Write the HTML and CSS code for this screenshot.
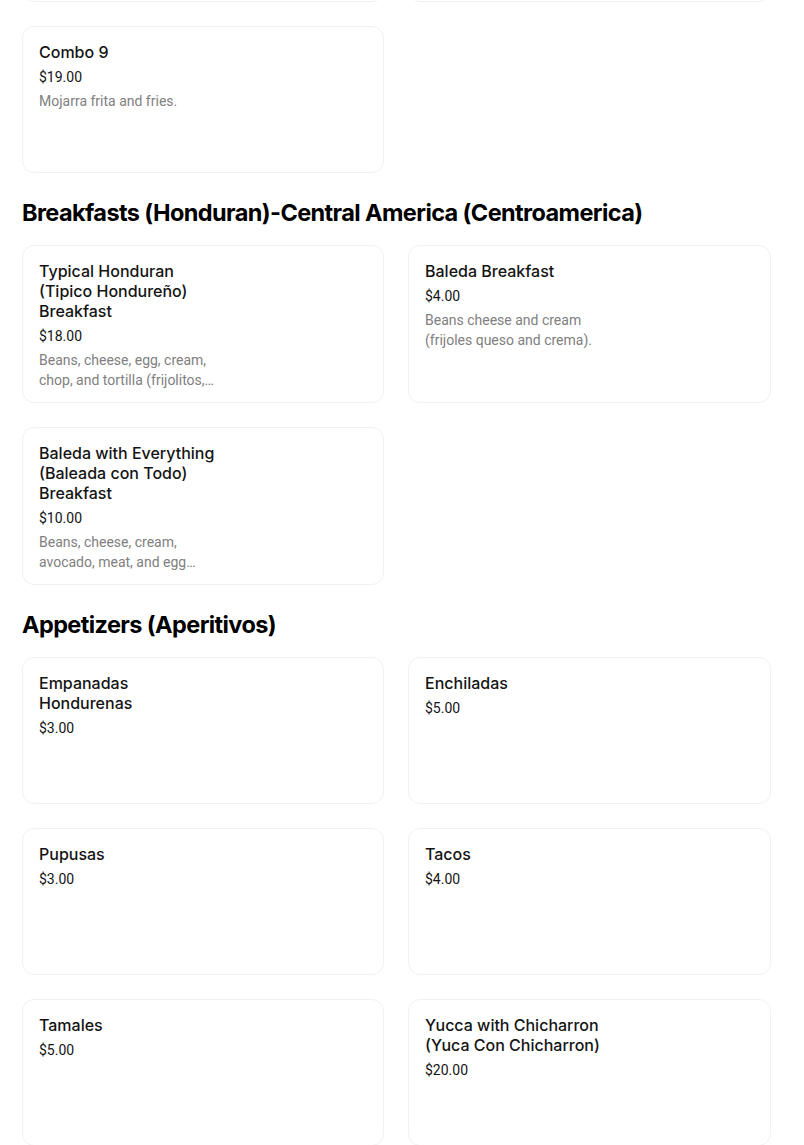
FILE: index.html
```html
<!DOCTYPE html>
<html lang="en">
<head>
<meta charset="utf-8">
<title>Menu</title>
<link rel="stylesheet" href="styles.css">
</head>
<body>
<main class="menu">
  <section class="section section-prev">
    <div class="grid">
      <div class="card"><div class="info"><div class="title">Combo 7</div><div class="price">$18.00</div></div></div>
      <div class="card"><div class="info"><div class="title">Combo 8</div><div class="price">$18.00</div></div></div>
      <div class="card"><div class="info"><div class="title">Combo 9</div><div class="price">$19.00</div><div class="desc">Mojarra frita and fries.</div></div></div>
    </div>
  </section>

  <section class="section">
    <h2 class="heading">Breakfasts (Honduran)-Central America (Centroamerica)</h2>
    <div class="grid">
      <div class="card"><div class="info"><div class="title">Typical Honduran (Tipico Hondureño) Breakfast</div><div class="price">$18.00</div><div class="desc">Beans, cheese, egg, cream, chop, and tortilla (frijolitos, queso, huevo, crema, chuleta y tortilla).</div></div></div>
      <div class="card"><div class="info"><div class="title">Baleda Breakfast</div><div class="price">$4.00</div><div class="desc">Beans cheese and cream (frijoles queso and crema).</div></div></div>
      <div class="card"><div class="info"><div class="title">Baleda with Everything (Baleada con Todo) Breakfast</div><div class="price">$10.00</div><div class="desc">Beans, cheese, cream, avocado, meat, and egg (baleada con todo).</div></div></div>
    </div>
  </section>

  <section class="section">
    <h2 class="heading">Appetizers (Aperitivos)</h2>
    <div class="grid">
      <div class="card"><div class="info"><div class="title">Empanadas Hondurenas</div><div class="price">$3.00</div></div></div>
      <div class="card"><div class="info"><div class="title">Enchiladas</div><div class="price">$5.00</div></div></div>
      <div class="card"><div class="info"><div class="title">Pupusas</div><div class="price">$3.00</div></div></div>
      <div class="card"><div class="info"><div class="title">Tacos</div><div class="price">$4.00</div></div></div>
      <div class="card"><div class="info"><div class="title">Tamales</div><div class="price">$5.00</div></div></div>
      <div class="card"><div class="info"><div class="title">Yucca with Chicharron (Yuca Con Chicharron)</div><div class="price">$20.00</div></div></div>
    </div>
  </section>
</main>
</body>
</html>
```

FILE: styles.css
```css
* { box-sizing: border-box; }
html, body { margin: 0; padding: 0; background: #fff; }
body { font-family: Roboto, "Liberation Sans", sans-serif; color: #000; }

.menu { padding: 0 33px 0 22px; }

.section-prev { margin-top: -145px; }

.heading {
  margin: 24px 0 16px;
  font-family: Inter, "Liberation Sans", sans-serif;
  font-size: 23.5px;
  line-height: 32px;
  font-weight: 700;
  letter-spacing: -0.6px;
  color: #000;
}

.grid {
  display: grid;
  grid-template-columns: 362px 1fr;
  gap: 24px;
}

.card {
  min-height: 147px;
  border: 1px solid #f1f1f1;
  border-radius: 12px;
  padding: 15px 16px 12px;
  background: #fff;
}

.info { max-width: 182px; }

.title {
  font-family: Inter, "Liberation Sans", sans-serif;
  font-size: 16px;
  line-height: 20px;
  font-weight: 500;
  color: #141414;
}

.price {
  margin-top: 5px;
  font-size: 14px;
  line-height: 20px;
  color: #141414;
}

.desc {
  margin-top: 4px;
  font-size: 14px;
  line-height: 20px;
  font-weight: 400;
  color: #808080;
  display: -webkit-box;
  -webkit-line-clamp: 2;
  -webkit-box-orient: vertical;
  overflow: hidden;
}
```
